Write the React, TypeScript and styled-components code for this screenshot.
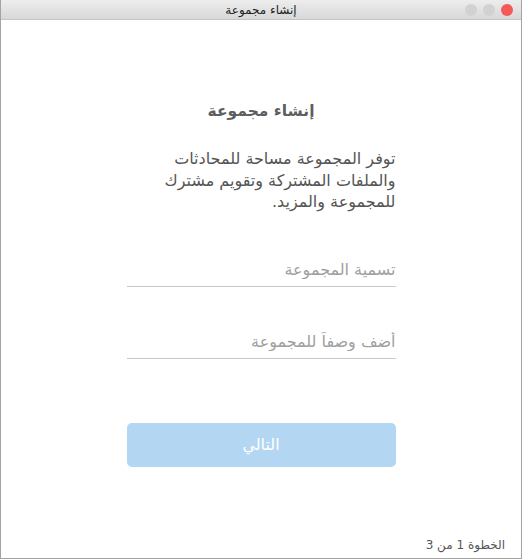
import React from "react";
import styled, { createGlobalStyle } from "styled-components";

const GlobalStyle = createGlobalStyle`
  html, body {
    margin: 0;
    padding: 0;
    background: #ffffff;
  }
  * {
    box-sizing: border-box;
  }
`;

const FONT = `"DejaVu Sans", "Noto Sans", sans-serif`;

const App: React.FC = () => {
  const [name, setName] = React.useState("");
  const [description, setDescription] = React.useState("");

  return (
    <>
      <GlobalStyle />
      <Window dir="rtl">
        <TitleBar>
          <WindowTitle>إنشاء مجموعة</WindowTitle>
          <Lights>
            <Light color="#d2d2d2" />
            <Light color="#d2d2d2" />
            <Light color="#f45b58" />
          </Lights>
        </TitleBar>
        <Body>
          <Form>
            <Heading>إنشاء مجموعة</Heading>
            <Intro>توفر المجموعة مساحة للمحادثات والملفات المشتركة وتقويم مشترك للمجموعة والمزيد.</Intro>
            <Field
              value={name}
              onChange={(e) => setName(e.target.value)}
              placeholder="تسمية المجموعة"
            />
            <Field
              value={description}
              onChange={(e) => setDescription(e.target.value)}
              placeholder="أضف وصفاً للمجموعة"
            />
            <NextButton disabled={!name}>التالي</NextButton>
          </Form>
        </Body>
        <Footer>الخطوة 1 من 3</Footer>
      </Window>
    </>
  );
};

const Window = styled.div`
  width: 522px;
  height: 559px;
  display: flex;
  flex-direction: column;
  border: 1px solid #a3a3a3;
  border-top: 0;
  background: #ffffff;
  font-family: ${FONT};
`;

const TitleBar = styled.div`
  height: 20px;
  position: relative;
  display: flex;
  align-items: center;
  justify-content: center;
  background: linear-gradient(#ededed, #d8d8d8);
  border-bottom: 1px solid #c4c4c4;
`;

const WindowTitle = styled.div`
  font-size: 12px;
  color: #222222;
  line-height: 20px;
`;

const Lights = styled.div`
  position: absolute;
  right: 8px;
  top: 4px;
  direction: ltr;
  display: flex;
  gap: 6px;
`;

const Light = styled.span<{ color: string }>`
  width: 12px;
  height: 12px;
  border-radius: 50%;
  background: ${({ color }) => color};
`;

const Body = styled.div`
  flex: 1;
  display: flex;
  justify-content: center;
  padding-top: 81px;
`;

const Form = styled.div`
  width: 269px;
  display: flex;
  flex-direction: column;
`;

const Heading = styled.h1`
  margin: 0;
  text-align: center;
  font-size: 15.5px;
  font-weight: bold;
  color: #5e5e5e;
  line-height: 20px;
`;

const Intro = styled.p`
  margin: 27px 0 0;
  font-size: 16px;
  line-height: 21.5px;
  color: #555555;
  text-align: right;
`;

const Field = styled.input`
  margin-top: 40px;
  height: 34px;
  width: 100%;
  border: 0;
  border-bottom: 1px solid #c8c8c8;
  padding: 0;
  font-family: ${FONT};
  font-size: 16px;
  color: #444444;
  outline: none;
  background: transparent;
  direction: rtl;
  & + & {
    margin-top: 38px;
  }
  &::placeholder {
    color: #a0a0a0;
  }
`;

const NextButton = styled.button`
  margin-top: 64px;
  height: 44px;
  border: 0;
  border-radius: 5px;
  background: #b3d6f2;
  color: #ffffff;
  font-family: ${FONT};
  font-size: 16px;
  &:disabled {
    cursor: default;
  }
`;

const Footer = styled.div`
  height: 30px;
  padding: 3px 16px 0;
  font-size: 12px;
  color: #555555;
  line-height: 28px;
`;

export default App;
